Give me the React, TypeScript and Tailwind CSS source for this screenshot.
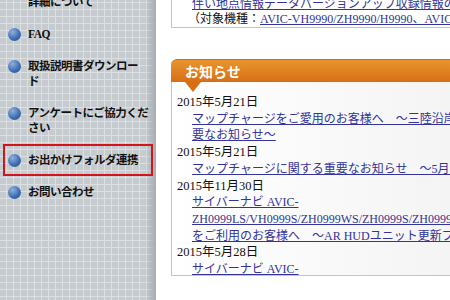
import React from "react";

type Item = { lines: string[]; active?: boolean };

const items: Item[] = [
  { lines: ["地点情報の", "詳細について"] },
  { lines: ["FAQ"] },
  { lines: ["取扱説明書ダウンロー", "ド"] },
  { lines: ["アンケートにご協力くだ", "さい"] },
  { lines: ["お出かけフォルダ連携"], active: true },
  { lines: ["お問い合わせ"] },
];

type Row = { kind: "date" | "link"; text: string };

const rows: Row[] = [
  { kind: "date", text: "2015年5月21日" },
  { kind: "link", text: "マップチャージをご愛用のお客様へ　～三陸沿岸道路開通に伴う重" },
  { kind: "link", text: "要なお知らせ～" },
  { kind: "date", text: "2015年5月21日" },
  { kind: "link", text: "マップチャージに関する重要なお知らせ　～5月「地図更新」～" },
  { kind: "date", text: "2015年11月30日" },
  { kind: "link", text: "サイバーナビ AVIC-" },
  { kind: "link", text: "ZH0999LS/VH0999S/ZH0999WS/ZH0999S/ZH0999L" },
  { kind: "link", text: "をご利用のお客様へ　～AR HUDユニット更新プログラム～" },
  { kind: "date", text: "2015年5月28日" },
  { kind: "link", text: "サイバーナビ AVIC-" },
];

export default function App() {
  return (
    <div className="flex h-[300px] w-[450px] overflow-hidden bg-white font-['Liberation_Serif','Noto_Sans_CJK_JP',serif]">
      <aside className="h-full w-[156px] shrink-0 overflow-hidden bg-[#c6cbcf] bg-[linear-gradient(to_left,#a5abaf,rgba(198,203,207,0)_11px),linear-gradient(to_right,#dce0e3_1px,transparent_1px),linear-gradient(to_bottom,#dce0e3_1px,transparent_1px)] bg-size-[100%_100%,7px_7px,7px_7px] bg-position-[0_0,6px_2px,6px_2px] px-[3px]">
        <ul className="-mt-[29px] flex flex-col">
          {items.map((it, i) => (
            <li
              key={i}
              className={
                it.active
                  ? "flex border-2 border-[#d3141c] py-[6.5px] pl-[3px]"
                  : "flex border-2 border-transparent py-[6.5px] pl-[3px]"
              }
            >
              <span className="mt-[1px] h-[13px] w-[13px] shrink-0 rounded-full bg-[radial-gradient(circle_at_35%_30%,#8fb1de,#3f6fb2_55%,#1f4a88)]" />
              <span className="ml-[7px] whitespace-nowrap text-[11.5px] font-bold leading-[15px] tracking-[-0.5px] text-[#111]">
                {it.lines.map((l, j) => (
                  <div key={j}>{l}</div>
                ))}
              </span>
            </li>
          ))}
        </ul>
      </aside>

      <main className="min-w-0 flex-1 overflow-hidden pl-[15px]">
        <div className="w-[420px]">
          <div className="-mt-[3px] border-b border-l border-[#c4c4c4] pl-[20px] text-[12px] leading-[15px] text-[#111]">
            <div className="whitespace-nowrap">
              <a className="text-[#333399] underline">伴い地点情報データバージョンアップ収録情報の詳細について</a>
            </div>
            <div className="-ml-[4px] whitespace-nowrap">
              （対象機種：
              <a className="text-[#333399] underline">AVIC-VH9990/ZH9990/H9990、AVIC-ZH9900</a>
            </div>
          </div>

          <section className="mt-[31px]">
            <div className="relative h-[23px] rounded-tl-[6px] border-t border-[#c66f1c] bg-linear-to-b from-[#e8952d] to-[#d86e16] pl-[14px] font-['Noto_Sans_CJK_JP',sans-serif] text-[14px] font-bold leading-[22px] text-white">
              お知らせ
              <span className="absolute left-[14px] top-full h-0 w-0 border-x-[8px] border-t-[10px] border-x-transparent border-t-[#d86e16]" />
            </div>
            <div className="h-[194px] overflow-hidden border-b border-l border-[#c4c4c4] bg-linear-to-r from-white to-[#efefef] pl-[5px] pt-[12px] text-[12px] leading-[16.7px] text-[#111]">
              {rows.map((r, i) =>
                r.kind === "date" ? (
                  <div key={i} className="whitespace-nowrap text-[12.5px]">
                    {r.text}
                  </div>
                ) : (
                  <div key={i} className="whitespace-nowrap pl-[15px]">
                    <a className="text-[#333399] underline">{r.text}</a>
                  </div>
                )
              )}
            </div>
          </section>
        </div>
      </main>
    </div>
  );
}
